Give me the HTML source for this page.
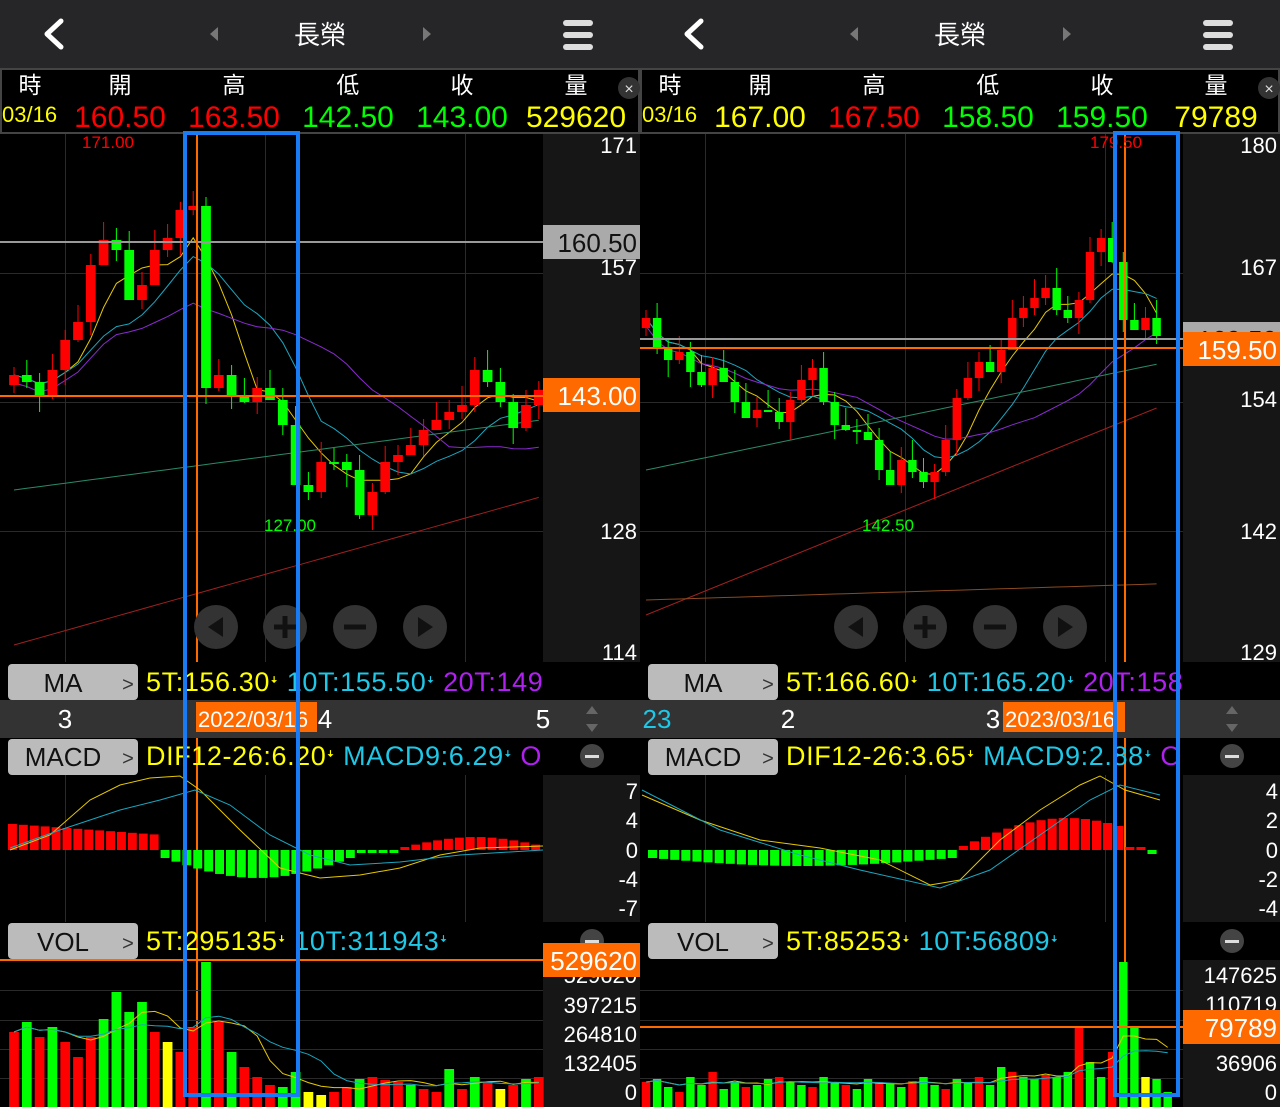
<!DOCTYPE html><html><head><meta charset="utf-8"><style>
*{margin:0;padding:0;box-sizing:border-box}
body{width:1280px;height:1107px;background:#000;overflow:hidden;position:relative;font-family:"Liberation Sans","Noto Sans CJK TC",sans-serif;color:#fff}
</style></head><body>
<svg id="s" width="1280" height="1107" style="position:absolute;left:0;top:0" font-family="Liberation Sans, Noto Sans CJK TC, sans-serif"></svg>
<script>
const S=document.getElementById('s');let h='<defs><clipPath id="c0"><rect x="0" y="650" width="543" height="130"/></clipPath><clipPath id="c1"><rect x="640" y="650" width="543" height="130"/></clipPath></defs>';
function R(x,y,w,hh,f,extra){h+=`<rect x="${x}" y="${y}" width="${w}" height="${hh}" fill="${f}" ${extra||''}/>`}
function T(x,y,t,sz,f,anc,extra){h+=`<text x="${x}" y="${y}" font-size="${sz}" fill="${f}" text-anchor="${anc||'start'}" ${extra||''}>${t}</text>`}
function L(pts,c,w){h+=`<polyline points="${pts.map(p=>p[0].toFixed(1)+','+p[1].toFixed(1)).join(' ')}" fill="none" stroke="${c}" stroke-width="${w||1}"/>`}
function ma(a,n){return a.map((v,i)=>{let s=0,k=0;for(let j=Math.max(0,i-n+1);j<=i;j++){s+=a[j];k++}return s/k})}
function panel(o,d){
 const cid=o?'c1':'c0';
 R(o,0,640,68,'#262628');
 h+=`<path d="M${o+61} 21 L${o+47} 34 L${o+61} 47" stroke="#fff" stroke-width="5" fill="none" stroke-linecap="round" stroke-linejoin="round"/>`;
 h+=`<path d="M${o+218} 27 L${o+210} 34 L${o+218} 41Z" fill="#777"/><path d="M${o+423} 27 L${o+431} 34 L${o+423} 41Z" fill="#777"/>`;
 T(o+320,44,'長榮',26,'#fff','middle');
 for(let i=0;i<3;i++)R(o+563,20+i*12,30,6,'#ddd','rx="3"');
 R(o,68,640,66,'#000');h+=`<rect x="${o+1}" y="69" width="638" height="64" fill="none" stroke="#444" stroke-width="2"/>`;
 const lab=['時','開','高','低','收','量'],lx=[30,120,234,348,462,576];
 lab.forEach((l,i)=>T(o+lx[i],93,l,23,'#fff','middle'));
 h+=`<circle cx="${o+629}" cy="88" r="11" fill="#333"/><text x="${o+629}" y="94" font-size="16" fill="#ddd" text-anchor="middle">×</text>`;
 T(o+2,122,'03/16',22,'#ff0');
 d.vals.forEach((v,i)=>T(o+[120,234,348,462,576][i],127,v[0],30,v[1],'middle'));
 R(o+543,134,97,528,'#161616');
 [65,265,465].forEach(x=>R(o+x,134,1,528,'#2a2a2a'));
 [273,402,531].forEach(y=>R(o,y,543,1,'#2a2a2a'));
 const n=d.c.length,x0=o+d.x0,sp=d.sp;
 const X=i=>x0+i*sp;
 L(d.c.map((v,i)=>[X(i),ma(d.c,5)[i]]),'#e6c800');
 L(d.c.map((v,i)=>[X(i),ma(d.c,10)[i]]),'#1aa7c0');
 L(d.c.map((v,i)=>[X(i),ma(d.c,20)[i]+8]),'#8a2bd0');
 L(d.c.map((v,i)=>[X(i),d.l60(i)]),'#2a8a6a');
 L(d.c.map((v,i)=>[X(i),d.l120(i)]),'#a02020');
 if(d.l240)L(d.c.map((v,i)=>[X(i),d.l240(i)]),'#8a4a20');
 for(let i=0;i<n;i++){let op=i?d.c[i-1]:d.c[0]+10,cl=d.c[i];let up=cl<op;let col=up?'#f00':'#0f0';
  let t=Math.min(op,cl),b=Math.max(op,cl);if(b-t<2)b=t+2;
  R(X(i)-0.5,t-8-(i*7%13),1,b-t+16+(i*5%11),col);R(X(i)-sp*0.38,t,sp*0.76,b-t,col);}
 d.hl.forEach(l=>{R(o,l.y,543,2,l.c)});
 R(d.ov,134,2,973,'#ff6a00');
 T(o+d.hiX,148,d.hi,17,'#f00','middle');T(o+d.loX,531,d.lo,17,'#0f0','middle');
 d.ax.forEach(a=>T(o+637,a[1],a[0],22,'#fff','end'));
 d.tags.forEach(t=>{R(o+543,t.y,97,34,t.bg);T(o+637,t.y+27,t.t,26,t.fc,'end')});
 [216,285,355,425].forEach((x,i)=>{h+=`<circle cx="${o+x}" cy="627" r="22" fill="#333"/>`;
  const c=o+x;h+=[`<path d="M${c+7} 617 L${c-8} 627 L${c+7} 637Z" fill="#111"/>`,`<path d="M${c-11} 627 H${c+11} M${c} 616 V638" stroke="#111" stroke-width="5"/>`,`<path d="M${c-11} 627 H${c+11}" stroke="#111" stroke-width="5"/>`,`<path d="M${c-7} 617 L${c+8} 627 L${c-7} 637Z" fill="#111"/>`][i]});
 R(o,662,543,38,'#000');R(o+8,664,130,36,'#bbb','rx="4"');T(o+63,692,'MA',26,'#111','middle');T(o+128,691,'&gt;',20,'#333','middle');
 h+=`<text x="${o+146}" y="691" font-size="27" letter-spacing="0.6" fill="#ff0" clip-path="url(#${cid})">${d.ma}</text>`;
 R(o,700,640,38,'#333');d.dr.forEach(t=>T(o+t[0],728,t[1],26,t[2]||'#fff','middle'));
 R(o+d.dateX,702,d.dateW,30,'#ff6a00');T(o+d.dateX+2,727,d.date,22,'#fff');
 h+=`<path d="M${o+586} 714 L${o+592} 706 L${o+598} 714Z M${o+586} 724 L${o+592} 732 L${o+598} 724Z" fill="#666"/>`;
 R(o+8,739,130,36,'#bbb','rx="4"');T(o+63,766,'MACD',26,'#111','middle');T(o+128,765,'&gt;',20,'#333','middle');
 h+=`<text x="${o+146}" y="765" font-size="27" letter-spacing="0.6" clip-path="url(#${cid})">${d.macd}</text>`;
 R(o+543,775,97,147,'#161616');
 [65,265,465].forEach(x=>R(o+x,775,1,147,'#2a2a2a'));
 h+=`<circle cx="${o+592}" cy="756" r="12" fill="#444"/>`;R(o+585,755,14,3,'#ddd');
 d.mb.forEach((v,i)=>{let x=o+8+i*d.msp;R(x,v>0?850-v:850,d.msp-2,Math.abs(v),v>0?'#f00':'#0f0')});
 L(d.dif,'#e6c800');L(d.dea,'#1aa7c0');
 d.max.forEach(a=>T(o+638,a[1],a[0],22,'#fff','end'));
 R(o+8,923,130,36,'#bbb','rx="4"');T(o+63,951,'VOL',26,'#111','middle');T(o+128,950,'&gt;',20,'#333','middle');
 h+=`<text x="${o+146}" y="950" font-size="27" letter-spacing="0.6">${d.vol}</text>`;
 h+=`<circle cx="${o+592}" cy="941" r="12" fill="#444"/>`;R(o+585,940,14,3,'#ddd');
 R(o+543,960,97,147,'#161616');
 [990,1020,1049,1078].forEach(y=>R(o,y,543,1,'#2a2a2a'));
 d.vb.forEach((v,i)=>{let x=X(i);R(x-sp*0.38,1107-v[0],sp*0.76,v[0],v[1])});
 L(d.vb.map((v,i)=>[X(i),1107-ma(d.vb.map(q=>q[0]),5)[i]]),'#e6c800');
 L(d.vb.map((v,i)=>[X(i),1107-ma(d.vb.map(q=>q[0]),10)[i]]),'#1aa7c0');
 d.vax.forEach(a=>T(o+637,a[1],a[0],22,'#fff','end'));
 R(o,d.vline,543,2,'#ff6a00');
 R(o+543,d.vtY,97,34,'#ff6a00');T(o+637,d.vtY+27,d.vt,26,'#fff','end');
 h+=`<rect x="${d.box[0]}" y="133" width="${d.box[1]}" height="962" fill="none" stroke="#1a7cf5" stroke-width="4"/>`;
}
const AR='<tspan font-size="16">ꜜ</tspan>';
const lc=[375,382,395,370,340,322,265,240,250,300,285,250,238,210,206,388,375,395,402,388,400,425,485,492,462,462,470,515,492,462,455,445,430,420,412,405,370,382,402,428,405,390];
const lmb=[];for(let i=0;i<14;i++)lmb.push(26-i*0.8);for(let i=0;i<18;i++)lmb.push(-(8+Math.sin(i/17*Math.PI)*20));for(let i=0;i<17;i++)lmb.push(i<4?-3:(3+Math.sin((i-4)/13*Math.PI)*10));
const lvb=[[75,'#f00'],[85,'#0f0'],[70,'#f00'],[80,'#0f0'],[65,'#f00'],[50,'#f00'],[70,'#f00'],[88,'#0f0'],[115,'#0f0'],[95,'#0f0'],[105,'#0f0'],[75,'#f00'],[65,'#ff0'],[55,'#f00'],[80,'#f00'],[145,'#0f0'],[85,'#f00'],[55,'#0f0'],[40,'#f00'],[30,'#f00'],[22,'#f00'],[20,'#0f0'],[35,'#0f0'],[15,'#ff0'],[12,'#ff0'],[15,'#f00'],[20,'#f00'],[28,'#0f0'],[30,'#f00'],[27,'#f00'],[25,'#f00'],[22,'#0f0'],[18,'#f00'],[15,'#f00'],[38,'#0f0'],[18,'#f00'],[30,'#0f0'],[25,'#f00'],[18,'#ff0'],[22,'#f00'],[28,'#0f0'],[30,'#f00']];
panel(0,{vals:[['160.50','#f00'],['163.50','#f00'],['142.50','#0f0'],['143.00','#0f0'],['529620','#ff0']],
 c:lc,x0:14,sp:12.8,l60:i=>490-i*1.7,l120:i=>645-i*3.6,
 hl:[{y:241,c:'#999'},{y:395,c:'#ff6a00'}],ov:196,hi:'171.00',hiX:108,lo:'127.00',loX:290,
 ax:[['171',153],['157',275],['128',539],['114',660]],
 tags:[{y:225,bg:'#aaa',t:'160.50',fc:'#111'},{y:378,bg:'#ff6a00',t:'143.00',fc:'#fff'}],
 ma:'5T:156.30'+AR+' <tspan fill="#1ec8e6">10T:155.50'+AR+'</tspan> <tspan fill="#b020f0">20T:149.</tspan>',
 dr:[[65,'3'],[325,'4'],[543,'5']],dateX:196,dateW:121,date:'2022/03/16',
 macd:'<tspan fill="#ff0">DIF12-26:6.20'+AR+'</tspan> <tspan fill="#1ec8e6">MACD9:6.29'+AR+'</tspan> <tspan fill="#b020f0">OSC</tspan>',
 mb:lmb,msp:10.9,
 dif:[[10,850],[50,835],[90,800],[120,785],[150,778],[180,776],[200,790],[240,830],[280,868],[320,878],[360,875],[400,868],[440,855],[480,848],[543,846]],
 dea:[[10,848],[60,830],[120,810],[160,800],[195,790],[230,805],[270,835],[310,855],[350,865],[400,862],[460,855],[543,850]],
 max:[['7',799],['4',828],['0',858],['-4',887],['-7',916]],
 vol:'<tspan fill="#ff0">5T:295135'+AR+'</tspan> <tspan fill="#1ec8e6">10T:311943'+AR+'</tspan>',
 vb:lvb,vax:[['529620',983],['397215',1013],['264810',1042],['132405',1071],['0',1100]],
 vline:959,vtY:943,vt:'529620',box:[185,113]});
const rc=[318,348,360,352,372,385,368,382,402,418,410,412,422,400,380,368,402,425,430,432,440,470,485,460,472,482,472,440,398,378,362,372,350,318,308,298,288,310,318,300,252,238,262,320,330,318,336];
const rmb=[];for(let i=0;i<28;i++)rmb.push(-(8+Math.sin(i/27*Math.PI)*8));for(let i=0;i<17;i++)rmb.push(i<15?(4+Math.sin(i/15*Math.PI*0.8)*28):3);rmb.push(-4);
const rvb=[];const rvh=[25,28,20,15,30,22,35,18,25,20,22,28,30,25,22,20,30,25,22,18,28,25,24,20,26,30,22,18,28,24,30,22,40,35,30,28,32,30,35,80,45,30,55,145,80,30,28,15];
rvh.forEach((v,i)=>rvb.push([v,i%3?'#0f0':'#f00']));rvb[39][1]='#f00';rvb[43][1]='#0f0';rvb[45][1]='#ff0';
panel(640,{vals:[['167.00','#ff0'],['167.50','#f00'],['158.50','#0f0'],['159.50','#0f0'],['79789','#ff0']],
 c:rc,x0:6,sp:11.1,l60:i=>470-i*2.3,l120:i=>615-i*4.5,l240:i=>600-i*0.35,
 hl:[{y:338,c:'#999'},{y:347,c:'#ff6a00'}],ov:1124,hi:'179.50',hiX:476,lo:'142.50',loX:248,
 ax:[['180',153],['167',275],['154',407],['142',539],['129',660]],
 tags:[{y:322,bg:'#aaa',t:'160.50',fc:'#111'},{y:332,bg:'#ff6a00',t:'159.50',fc:'#fff'}],
 ma:'5T:166.60'+AR+' <tspan fill="#1ec8e6">10T:165.20'+AR+'</tspan> <tspan fill="#b020f0">20T:158.</tspan>',
 dr:[[17,'23','#1ec8e6'],[148,'2'],[353,'3']],dateX:363,dateW:122,date:'2023/03/16',
 macd:'<tspan fill="#ff0">DIF12-26:3.65'+AR+'</tspan> <tspan fill="#1ec8e6">MACD9:2.88'+AR+'</tspan> <tspan fill="#b020f0">OSC</tspan>',
 mb:rmb,msp:11.1,
 dif:[[642,795],[700,820],[760,840],[820,848],[880,860],[930,885],[960,880],[1000,840],[1040,810],[1080,785],[1100,776],[1125,790],[1160,800]],
 dea:[[642,790],[720,830],[800,855],[860,870],[940,888],[990,870],[1040,835],[1090,800],[1120,785],[1160,795]],
 max:[['4',799],['2',828],['0',858],['-2',887],['-4',916]],
 vol:'<tspan fill="#ff0">5T:85253'+AR+'</tspan> <tspan fill="#1ec8e6">10T:56809'+AR+'</tspan>',
 vb:rvb,vax:[['147625',983],['110719',1012],['36906',1071],['0',1100]],
 vline:1026,vtY:1010,vt:'79789',box:[1115,63]});
R(1183,1010,97,34,'#ff6a00');T(1277,1037,'79789',26,'#fff','end');
S.innerHTML=h;
</script>
</body></html>
